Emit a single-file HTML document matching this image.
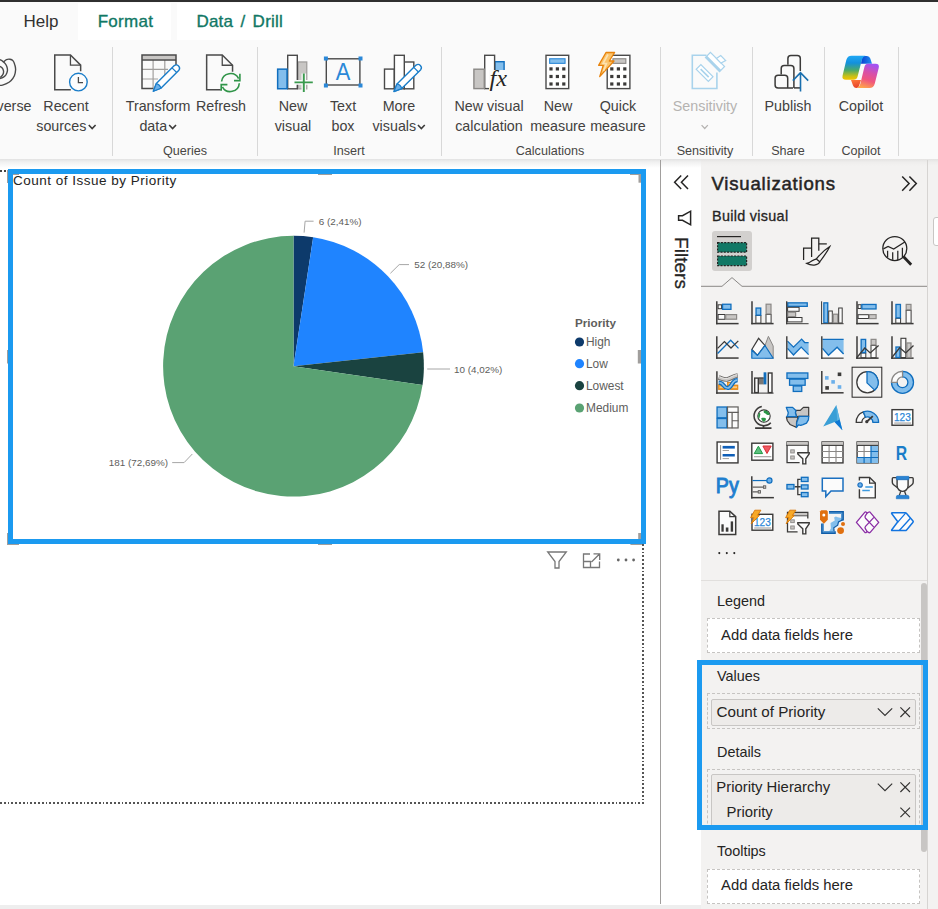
<!DOCTYPE html>
<html><head><meta charset="utf-8">
<style>
*{box-sizing:border-box;margin:0;padding:0}
html,body{width:938px;height:909px;overflow:hidden;background:#fff}
body{font-family:"Liberation Sans",sans-serif;color:#252423;position:relative}
.abs{position:absolute}
#topbar{left:0;top:0;width:938px;height:2px;background:#2f2f2f}
#ribbon{left:0;top:2px;width:938px;height:157px;background:#fafafa}
.tab{position:absolute;top:3px;height:37px;font-size:17px;line-height:37px;text-align:center;white-space:nowrap}
.tab.w{background:#fff;color:#117865;-webkit-text-stroke:0.35px #117865}
.rl{position:absolute;font-size:14.3px;line-height:20px;text-align:center;white-space:nowrap;color:#424140;transform:translateX(-50%)}
.gl{position:absolute;top:142.6px;font-size:12.6px;line-height:16px;text-align:center;white-space:nowrap;color:#484644;transform:translateX(-50%)}
.dv{position:absolute;top:47px;width:1px;height:109px;background:#d8d8d8}
svg{position:absolute;overflow:visible}
.chev{display:inline-block;width:7.8px;height:7.8px;margin-left:1.6px;position:relative;top:0px}
</style></head><body>
<div id="ribbon" class="abs"></div>
<div id="topbar" class="abs"></div>
<!-- tabs -->
<div class="tab" style="left:23px;width:36px;color:#323130">Help</div>
<div class="tab w" style="left:78px;width:93px;padding-left:2px;letter-spacing:0.3px">Format</div>
<div class="tab w" style="left:177px;width:123px;padding-left:2.5px;letter-spacing:0.25px;word-spacing:2.2px">Data / Drill</div>
<!-- ribbon shadow -->
<div class="abs" style="left:0;top:159px;width:938px;height:9px;background:linear-gradient(#e2e2e2,#f1f1f1 35%,#ffffff)"></div>
<div class="rl" style="left:14px;top:96px">verse</div>
<div class="rl" style="left:66px;top:96px">Recent<br>sources<svg class="chev" style="position:relative" viewBox="0 0 8 8"><path d="M0.5 2 L4 5.8 L7.5 2" fill="none" stroke="#3b3a39" stroke-width="1.6"/></svg></div>
<div class="rl" style="left:158px;top:96px">Transform<br>data<svg class="chev" style="position:relative" viewBox="0 0 8 8"><path d="M0.5 2 L4 5.8 L7.5 2" fill="none" stroke="#3b3a39" stroke-width="1.6"/></svg></div>
<div class="rl" style="left:221px;top:96px">Refresh</div>
<div class="rl" style="left:293px;top:96px">New<br>visual</div>
<div class="rl" style="left:343px;top:96px">Text<br>box</div>
<div class="rl" style="left:399px;top:96px">More<br>visuals<svg class="chev" style="position:relative" viewBox="0 0 8 8"><path d="M0.5 2 L4 5.8 L7.5 2" fill="none" stroke="#3b3a39" stroke-width="1.6"/></svg></div>
<div class="rl" style="left:489px;top:96px">New visual<br>calculation</div>
<div class="rl" style="left:558px;top:96px">New<br>measure</div>
<div class="rl" style="left:618px;top:96px">Quick<br>measure</div>
<div class="rl" style="left:788px;top:96px">Publish</div>
<div class="rl" style="left:861px;top:96px">Copilot</div>
<div class="rl" style="left:705px;top:96px;color:#b5b3b1">Sensitivity<br><svg class="chev" style="position:relative;margin:0" viewBox="0 0 8 8"><path d="M0.8 2.2 L4 5.6 L7.2 2.2" fill="none" stroke="#b5b3b1" stroke-width="1.3"/></svg></div>
<div class="gl" style="left:185px">Queries</div>
<div class="gl" style="left:349px">Insert</div>
<div class="gl" style="left:550px">Calculations</div>
<div class="gl" style="left:705px">Sensitivity</div>
<div class="gl" style="left:788px">Share</div>
<div class="gl" style="left:861px">Copilot</div>
<div class="dv" style="left:112px"></div>
<div class="dv" style="left:257px"></div>
<div class="dv" style="left:441px"></div>
<div class="dv" style="left:660px"></div>
<div class="dv" style="left:752px"></div>
<div class="dv" style="left:824px"></div>
<div class="dv" style="left:898px"></div>
<!-- RI-START --><svg class="abs" style="left:0;top:0" width="938" height="160" viewBox="0 0 938 160"><g fill="none" stroke="#4a4a4a" stroke-width="1.4"><path d="M3.7 61.9 C4.2 61.5 5.4 60.1 6.4 59.6 C7.4 59.2 8.8 59.0 9.9 59.2 C11.0 59.4 12.1 59.7 12.9 60.6 C13.7 61.5 14.4 63.3 14.8 64.8 C15.3 66.4 15.7 68.0 15.6 69.8 C15.5 71.6 15.2 73.9 14.4 75.7 C13.6 77.5 12.2 79.4 10.9 80.7 C9.6 82.0 7.8 83.0 6.4 83.7 C5.0 84.4 3.7 84.8 2.5 85.1 C1.3 85.4 -0.4 85.4 -1.0 85.5"/><path d="M-1.0 59.4 C-0.4 59.7 1.5 60.4 2.5 61.1 C3.5 61.8 4.2 62.5 5.0 63.4 C5.7 64.3 6.5 65.6 6.9 66.8 C7.3 68.0 7.6 69.5 7.4 70.8 C7.2 72.1 6.6 73.7 5.9 74.8 C5.2 75.8 4.7 76.5 3.5 77.2 C2.3 77.9 -0.2 78.5 -1.0 78.7"/><path d="M-1.0 66.0 C-0.5 66.3 1.2 67.0 2.0 67.8 C2.8 68.6 3.3 69.7 3.5 70.8 C3.7 71.9 3.4 73.3 3.0 74.3 C2.6 75.3 1.7 76.2 1.0 76.7 C0.3 77.2 -0.7 77.4 -1.0 77.5"/></g><path d="M80.3 71 V64.8 L70.1 54.6 H54.4 V89.4 H70.5" fill="none" stroke="#4a4a4a" stroke-width="1.5" transform="translate(0.35 0.35)"/><path d="M70.1 54.6 V64.8 H80.3" fill="none" stroke="#4a4a4a" stroke-width="1.3" transform="translate(0.35 0.35)"/><circle cx="78.4" cy="82.1" r="8.8" fill="#fdfdfd" stroke="#1a7dc9" stroke-width="1.4"/><path d="M78.4 77 V82.6 H83" fill="none" stroke="#4a4a4a" stroke-width="1.3"/><rect x="142" y="55" width="34" height="4.6" fill="#c8c6c4"/><path d="M153.1 60 V88.6 M164.8 60 V76 M142 69.3 H168 M142 79 H158" stroke="#a19f9d" stroke-width="1.2" fill="none"/><path d="M176 65 V55 H142 V88.6 H153.5 M142 60 H176" fill="none" stroke="#4a4a4a" stroke-width="1.5"/><path d="M153.3 91.2 L160.9 88.2 L178.9 70.2 A3.3 3.3 0 0 0 174.3 65.6 L156.3 83.6 Z" fill="#fff" stroke="#1a7dc9" stroke-width="1.4" stroke-linejoin="round"/><path d="M153.3 91.2 L160.9 88.2 Q160.0 84.5 156.3 83.6 Z" fill="#6cb0ea" stroke="#1a7dc9" stroke-width="1.2" stroke-linejoin="round"/><path d="M176.7 72.5 L172.0 67.8" stroke="#1a7dc9" stroke-width="1.2"/><path d="M232.2 71.5 V64.9 L221.9 54.7 H206.3 V89.3 H220.4" fill="none" stroke="#4a4a4a" stroke-width="1.5" transform="translate(0.35 0.35)"/><path d="M221.9 54.7 V64.9 H232.2" fill="none" stroke="#4a4a4a" stroke-width="1.3" transform="translate(0.35 0.35)"/><g fill="none" stroke="#2f9448" stroke-width="1.6"><path d="M221.6 81.5 A9 9 0 0 1 238.6 78.6"/><path d="M239.3 83.2 A9 9 0 0 1 222.4 86.8"/><path d="M239.9 73.8 V80.6 H234"/><path d="M221.2 90.8 V84.6 H227.4"/></g><rect x="298.05" y="61.95" width="8.70" height="26.90" fill="#c8c6c4" stroke="#a19f9d" stroke-width="1.3" /><rect x="287.70" y="55.30" width="9.60" height="33.50" fill="#ffffff" stroke="#4a4a4a" stroke-width="1.4" /><rect x="277.65" y="69.15" width="9.40" height="19.60" fill="#83beec" stroke="#106ebe" stroke-width="1.5" /><path d="M294.5 82.4 H312.8 M303.8 73.4 V92" stroke="#fafafa" stroke-width="4.6" fill="none"/><path d="M294.5 82.4 H312.8 M303.8 73.4 V92" stroke="#3a9a4e" stroke-width="1.9" fill="none"/><rect x="326.30" y="58.80" width="33.60" height="26.20" fill="none" stroke="#4a4a4a" stroke-width="1.4" /><rect x="323.9" y="56.5" width="4" height="4" fill="#2b88d8"/><rect x="358.5" y="56.5" width="4" height="4" fill="#2b88d8"/><rect x="323.9" y="83.5" width="4" height="4" fill="#2b88d8"/><rect x="358.5" y="83.5" width="4" height="4" fill="#2b88d8"/><text x="343" y="80.4" font-family="Liberation Sans, sans-serif" font-size="24" fill="#2b88d8" text-anchor="middle" textLength="14.6" lengthAdjust="spacingAndGlyphs">A</text><rect x="384.50" y="69.10" width="9.80" height="19.70" fill="#ffffff" stroke="#4a4a4a" stroke-width="1.4" /><rect x="404.30" y="62.00" width="9.50" height="26.80" fill="#ffffff" stroke="#4a4a4a" stroke-width="1.4" /><rect x="394.40" y="55.30" width="9.90" height="33.50" fill="#ffffff" stroke="#4a4a4a" stroke-width="1.4" /><path d="M394.0 91.5 L401.7 88.6 L420.7 69.7 A3.3 3.3 0 0 0 416.1 65.1 L397.0 83.9 Z" fill="#fff" stroke="#1a7dc9" stroke-width="1.4" stroke-linejoin="round"/><path d="M394.0 91.5 L401.7 88.6 Q400.8 84.8 397.0 83.9 Z" fill="#6cb0ea" stroke="#1a7dc9" stroke-width="1.2" stroke-linejoin="round"/><path d="M418.4 72.0 L413.8 67.3" stroke="#1a7dc9" stroke-width="1.2"/><rect x="494.90" y="61.70" width="9.20" height="13.60" fill="#83beec" stroke="#106ebe" stroke-width="1.4" /><rect x="484.70" y="55.30" width="9.90" height="33.30" fill="#ffffff" stroke="#4a4a4a" stroke-width="1.4" /><rect x="473.90" y="69.20" width="10.40" height="19.40" fill="#c8c6c4" stroke="#8a8886" stroke-width="1.4" /><rect x="489" y="70" width="18" height="22" fill="#fafafa"/><rect x="495.8" y="72" width="12" height="4.5" fill="#fafafa"/><text x="489.5" y="86.2" font-family="Liberation Serif, serif" font-style="italic" font-size="23" fill="#252423" textLength="17.5" lengthAdjust="spacingAndGlyphs">fx</text><rect x="546.00" y="55.30" width="22.70" height="33.30" fill="#ffffff" stroke="#4a4a4a" stroke-width="1.4" /><rect x="549.65" y="58.75" width="15.40" height="4.60" fill="#83beec" stroke="#2b88d8" stroke-width="1.1" /><rect x="549.4" y="67.30000000000001" width="3.2" height="3.2" fill="#3b3a39"/><rect x="549.4" y="74.9" width="3.2" height="3.2" fill="#3b3a39"/><rect x="549.4" y="82.4" width="3.2" height="3.2" fill="#3b3a39"/><rect x="555.8" y="67.30000000000001" width="3.2" height="3.2" fill="#3b3a39"/><rect x="555.8" y="74.9" width="3.2" height="3.2" fill="#3b3a39"/><rect x="555.8" y="82.4" width="3.2" height="3.2" fill="#3b3a39"/><rect x="562.1999999999999" y="67.30000000000001" width="3.2" height="3.2" fill="#3b3a39"/><rect x="562.1999999999999" y="74.9" width="3.2" height="3.2" fill="#3b3a39"/><rect x="562.1999999999999" y="82.4" width="3.2" height="3.2" fill="#3b3a39"/><rect x="607.20" y="55.30" width="22.70" height="33.30" fill="#ffffff" stroke="#4a4a4a" stroke-width="1.4" /><rect x="612.95" y="58.75" width="12.90" height="4.60" fill="#c8c6c4" stroke="#8a8886" stroke-width="1.1" /><rect x="610.1999999999999" y="67.30000000000001" width="3.2" height="3.2" fill="#3b3a39"/><rect x="610.1999999999999" y="74.9" width="3.2" height="3.2" fill="#3b3a39"/><rect x="610.1999999999999" y="82.4" width="3.2" height="3.2" fill="#3b3a39"/><rect x="616.8" y="67.30000000000001" width="3.2" height="3.2" fill="#3b3a39"/><rect x="616.8" y="74.9" width="3.2" height="3.2" fill="#3b3a39"/><rect x="616.8" y="82.4" width="3.2" height="3.2" fill="#3b3a39"/><rect x="623.1999999999999" y="67.30000000000001" width="3.2" height="3.2" fill="#3b3a39"/><rect x="623.1999999999999" y="74.9" width="3.2" height="3.2" fill="#3b3a39"/><rect x="623.1999999999999" y="82.4" width="3.2" height="3.2" fill="#3b3a39"/><path d="M606 52.5 H614.6 L609.3 61 H614 L599.7 76.6 L603.3 65.3 H598.6 Z" fill="#fac36b" stroke="#e8830c" stroke-width="1.3" stroke-linejoin="round"/><path d="M608 54.5 L603 63.5 H606.5 L603.5 71" stroke="#fde2b0" stroke-width="1.6" fill="none"/><path d="M706.5 55.2 H692.3 V88.5 H716.9 V72.6" fill="none" stroke="#a9d3ec" stroke-width="1.6"/><g transform="translate(704.6 73) rotate(45)"><rect x="-8.6" y="-3.3" width="17.2" height="6.6" fill="#fff" stroke="#a9d3ec" stroke-width="1.2"/><path d="M-5.6 0 H5.8" stroke="#a9d3ec" stroke-width="1.7"/></g><g transform="translate(715 62) rotate(45)"><rect x="-10" y="-3.5" width="20" height="7" fill="#fff" stroke="#a9d3ec" stroke-width="1.2"/><rect x="-10" y="1.2" width="20" height="2.6" fill="#a9d3ec"/><path d="M-1.5 -3.5 L-0.5 -8.6 H6.5 L5 -3.5 Z" fill="#fff" stroke="#a9d3ec" stroke-width="1.2"/></g><g fill="none" stroke="#3b3a39" stroke-width="1.5"><path d="M787.9 64.8 V58.5 Q787.9 55.5 790.9 55.5 H797.3 Q800.3 55.5 800.3 58.5 V71"/><path d="M781.2 74.5 V68.5 Q781.2 65.5 784.2 65.5 H790.9 Q793.9 65.5 793.9 68.5 V87.9"/><path d="M793 87.9 H778.1 Q775.1 87.9 775.1 84.9 V78.2 Q775.1 75.2 778.1 75.2 H784.7 Q787.7 75.2 787.7 78.2 V87.9"/><path d="M793.9 87.9 H800.5"/></g><path d="M800.5 91.4 V72.4 M792.8 80.6 L800.5 72.6 L808.2 80.6" fill="none" stroke="#1a6fae" stroke-width="1.6"/><defs>
<linearGradient id="cpA" x1="0" y1="0" x2="0" y2="1"><stop offset="0" stop-color="#20a8f5"/><stop offset="0.3" stop-color="#1390dd"/><stop offset="0.6" stop-color="#4aa96a"/><stop offset="0.85" stop-color="#c9c016"/><stop offset="1" stop-color="#f5c400"/></linearGradient>
<linearGradient id="cpB" x1="0.6" y1="0" x2="0.3" y2="1"><stop offset="0" stop-color="#a352f2"/><stop offset="0.35" stop-color="#d850a8"/><stop offset="0.65" stop-color="#f0567e"/><stop offset="1" stop-color="#ffa64a"/></linearGradient>
<linearGradient id="cpC" x1="0" y1="0" x2="1" y2="0"><stop offset="0" stop-color="#0a3fd0"/><stop offset="1" stop-color="#1f8ff0"/></linearGradient>
<linearGradient id="cpD" x1="0" y1="0" x2="0.3" y2="1"><stop offset="0" stop-color="#ff7a3a"/><stop offset="1" stop-color="#e8452a"/></linearGradient>
</defs>
<path d="M862 56 H867 Q869.5 56 870.3 58.5 L872 63.8 H861 Z" fill="url(#cpC)"/>
<path d="M851 80 H861 L859 86 Q858.3 87.9 856.5 87.9 H856 Q853.8 87.9 853 85.5 Z" fill="url(#cpD)"/>
<path d="M851.5 55.7 H865.5 Q862.8 56.5 861.8 60 L857.6 76.5 Q856.7 79.8 853.5 79.8 H846 Q841.6 79.8 842.6 75.5 L846.3 60 Q847.4 55.7 851.5 55.7 Z" fill="url(#cpA)"/>
<path d="M868 63.7 H875.5 Q879.8 63.7 878.7 68 L874.8 83.5 Q873.6 88 869.5 88 H856.5 Q859.2 87.6 860.3 84 L864.4 67 Q865.2 63.7 868 63.7 Z" fill="url(#cpB)"/>
</svg><!-- RI-END -->

<!-- page dotted outline -->
<div class="abs" style="left:0;top:170px;width:8px;height:2px;background:repeating-linear-gradient(90deg,#444 0 1.8px,transparent 1.8px 3.8px)"></div>
<div class="abs" style="left:0;top:802px;width:644px;height:1.6px;background:repeating-linear-gradient(90deg,#555 0 1.8px,transparent 1.8px 3.8px)"></div>
<div class="abs" style="left:642.2px;top:544px;width:1.7px;height:259.5px;background:repeating-linear-gradient(180deg,#555 0 1.8px,transparent 1.8px 3.8px)"></div>
<!-- visual frame -->
<div class="abs" style="left:8px;top:169px;width:638px;height:375px;border:5px solid #1b9af0;background:#fff"></div>
<div class="abs" id="vtitle" style="left:13px;top:173px;font-size:13.5px;letter-spacing:0.5px;line-height:16px;color:#252423;white-space:nowrap">Count of Issue by Priority</div>
<svg class="abs" style="left:0;top:0" width="660" height="600" viewBox="0 0 660 600">
<path d="M293.5 366.2 L293.50 235.80 A130.4 130.4 0 0 1 313.17 237.29 Z" fill="#0d3a6b"/>
<path d="M293.5 366.2 L313.17 237.29 A130.4 130.4 0 0 1 423.15 352.24 Z" fill="#1f84ff"/>
<path d="M293.5 366.2 L423.15 352.24 A130.4 130.4 0 0 1 422.53 385.05 Z" fill="#1a4340"/>
<path d="M293.5 366.2 L422.53 385.05 A130.4 130.4 0 1 1 293.50 235.80 Z" fill="#5aa273"/>

<g fill="none" stroke="#a6a6a6" stroke-width="1">
<polyline points="304.1,232.6 305.1,221.2 313.6,221.2"/>
<polyline points="390.4,273.3 399.2,264.6 409,264.6"/>
<polyline points="427.2,369 450,369"/>
<polyline points="192.3,454 184.1,462.6 172.2,462.6"/>
</g>
<g font-family="Liberation Sans, sans-serif" font-size="9.9" fill="#605e5c">
<text x="318.8" y="224.7">6 (2,41%)</text>
<text x="414.2" y="268.1">52 (20,88%)</text>
<text x="454" y="372.7">10 (4,02%)</text>
<text x="168" y="466.1" text-anchor="end">181 (72,69%)</text>
</g>
<text x="575" y="326.5" font-family="Liberation Sans, sans-serif" font-size="11.7" font-weight="bold" fill="#605e5c">Priority</text>
<g font-family="Liberation Sans, sans-serif" font-size="11.9" fill="#605e5c">
<circle cx="579.5" cy="342" r="4.6" fill="#0d3a6b"/><text x="586" y="346.2">High</text>
<circle cx="579.5" cy="363.7" r="4.6" fill="#1f84ff"/><text x="586" y="367.9">Low</text>
<circle cx="579.5" cy="385.7" r="4.6" fill="#1a4340"/><text x="586" y="389.9">Lowest</text>
<circle cx="579.5" cy="408" r="4.6" fill="#5aa273"/><text x="586" y="412.2">Medium</text>
</g>
<!-- handles -->
<g fill="#a09e9c">
<rect x="7" y="170" width="1" height="13"/><rect x="13" y="174" width="6" height="1"/>
<rect x="638.5" y="174" width="2.5" height="8.7"/><rect x="630" y="174" width="11" height="1"/>
<rect x="7" y="533" width="1" height="11.7"/><rect x="7" y="544" width="12" height="1"/>
<rect x="638.2" y="533" width="2.8" height="6"/><rect x="630.4" y="544" width="11.5" height="1"/>
<rect x="7" y="350" width="1" height="13.5"/><rect x="637.8" y="350" width="3.2" height="13.5"/>
<rect x="318" y="174" width="14" height="1"/><rect x="318" y="544" width="14" height="1"/>
</g>
<!-- visual header icons -->
<g fill="none" stroke="#777" stroke-width="1.3">
<path d="M547.7 552 H566.3 L559 561.5 V568 H555 V561.5 Z"/>
<path d="M590 554 H583.5 V567.5 H599.5 V561.5 M583.5 561.5 H590.5 V567.5 M593.5 553.8 H599.7 V560 M599.5 554 L591.5 562"/>
</g>
<g fill="#666"><circle cx="618.3" cy="560" r="1.4"/><circle cx="626" cy="560" r="1.4"/><circle cx="633.6" cy="560" r="1.4"/></g>
</svg>
<!-- bottom status strip -->
<div class="abs" style="left:0;top:905px;width:701px;height:4px;background:#eeeeee"></div>


<!-- filters pane -->
<div class="abs" style="left:660px;top:160px;width:1px;height:744px;background:#a19f9d"></div>
<div class="abs" style="left:701px;top:165px;width:226px;height:744px;background:#f3f2f1"></div>
<div class="abs" style="left:701px;top:159px;width:237px;height:7px;background:linear-gradient(#e4e3e2,#efeeed 50%,#f3f2f1)"></div>
<div class="abs" style="left:927px;top:160px;width:1px;height:749px;background:#d6d4d2"></div>
<div class="abs" style="left:928px;top:165px;width:10px;height:744px;background:#f3f2f1"></div>
<div class="abs" style="left:933px;top:217px;width:12px;height:29px;background:#fff;border:1px solid #c8c6c4;border-radius:3px"></div>
<div class="abs" style="left:701px;top:580px;width:226px;height:1px;background:#e1dfdd"></div>
<div class="abs" id="filt" style="left:673.2px;top:237px;width:15px;height:52px"><div style="position:absolute;left:0;top:0;transform-origin:0 0;transform:translate(18.6px,0) rotate(90deg);font-size:19.1px;line-height:22px;white-space:nowrap;-webkit-text-stroke:0.3px #252423">Filters</div></div>
<div class="abs" style="left:711.5px;top:171.97px;font-size:18.6px;line-height:24.18px;white-space:nowrap;letter-spacing:0.78px;-webkit-text-stroke:0.5px #252423;">Visualizations</div>
<div class="abs" style="left:712px;top:207.25px;font-size:14.4px;line-height:18.72px;white-space:nowrap;letter-spacing:0.3px;-webkit-text-stroke:0.3px #252423;">Build visual</div>
<div class="abs" style="left:712px;top:231px;width:40px;height:40px;background:#d2d0ce;border-radius:3px"></div>
<svg class="abs" style="left:0;top:0" width="938" height="909" viewBox="0 0 938 909">
<g fill="none" stroke="#252423" stroke-width="1.5">
<path d="M688 175.5 l-6.6 6.8 l6.6 6.8 M681.2 175.5 l-6.6 6.8 l6.6 6.8"/>
<path d="M902.2 176.5 l6.9 7.1 l-6.9 7.1 M909.4 176.5 l6.9 7.1 l-6.9 7.1"/>
<path d="M690.6 211.2 V224.8 L682.5 220.3 H678.6 V215.7 H682.5 Z"/>
</g>
<!-- build tab -->
<rect x="717" y="236" width="24" height="1.2" fill="#252423"/>
<rect x="717.6" y="242.6" width="29" height="9.6" fill="#117865" stroke="#252423" stroke-width="1.2" stroke-dasharray="2 1.3"/>
<rect x="717.6" y="256" width="29" height="9.6" fill="#117865" stroke="#252423" stroke-width="1.2" stroke-dasharray="2 1.3"/>
<path d="M701 286.3 H722 L732 277.6 L742 286.3 H927" fill="none" stroke="#8a8886" stroke-width="1"/>
<!-- format tab icon -->
<g fill="none" stroke="#252423" stroke-width="1.25">
<path d="M803.6 260 V248 H811.6"/>
<path d="M811.6 257 V238 H818.8 V250.8"/>
<path d="M818.8 243.9 H826.8"/>
<path d="M829.8 246.5 C825 249.5 819.5 255 816.3 259 L819.8 261.8 C823 257.5 827.5 251.5 829.8 246.5 Z" fill="#f3f2f1"/>
<path d="M816.3 259 C813 259 811.5 262.5 806.8 263.4 C811 265.8 818 266 819.8 261.8"/>
</g>
<!-- analytics icon -->
<g fill="none" stroke="#252423" stroke-width="1.25">
<circle cx="894.8" cy="248.5" r="12"/>
<path d="M883.4 248.9 L888.1 246.4 L893.7 249.1 L904.8 242"/>
<path d="M887.6 250.8 V257.4 M892.7 252.2 V259.8 M897.8 250.8 V260 M902.4 247.7 V257.4"/>
</g>
<path d="M903.6 256.8 L911.2 264.8" stroke="#252423" stroke-width="2.8" fill="none"/>
<!-- more ... -->
<g fill="#252423"><circle cx="719.3" cy="553.1" r="1.05"/><circle cx="726.8" cy="553.1" r="1.05"/><circle cx="734.3" cy="553.1" r="1.05"/></g>
<!-- VIZ-START --><g transform="translate(715.60 301.00)"><path d="M1.2 0.3 V23.35" stroke="#3b3a39" stroke-width="1.5" fill="none"/><path d="M0.44999999999999996 22.6 H23" stroke="#3b3a39" stroke-width="1.5" fill="none"/><rect x="2.50" y="3.80" width="3.50" height="3.90" fill="#fbfbfb" stroke="#3b3a39" stroke-width="1"/><rect x="6.95" y="3.25" width="8.40" height="5.10" fill="#83beec" stroke="#106ebe" stroke-width="1.3"/><rect x="2.50" y="13.50" width="6.80" height="4.80" fill="#fbfbfb" stroke="#3b3a39" stroke-width="1"/><rect x="10.10" y="13.60" width="10.90" height="4.60" fill="#c8c6c4" stroke="#8a8886" stroke-width="1.2"/></g>
<g transform="translate(750.60 301.00)"><path d="M1.4 0.3 V23.35" stroke="#3b3a39" stroke-width="1.5" fill="none"/><path d="M0.6499999999999999 22.6 H23" stroke="#3b3a39" stroke-width="1.5" fill="none"/><rect x="5.30" y="14.50" width="5.00" height="7.60" fill="#fbfbfb" stroke="#3b3a39" stroke-width="1"/><rect x="5.45" y="7.05" width="4.70" height="7.10" fill="#83beec" stroke="#106ebe" stroke-width="1.3"/><rect x="15.40" y="13.50" width="5.10" height="8.60" fill="#fbfbfb" stroke="#3b3a39" stroke-width="1"/><rect x="15.50" y="3.20" width="4.90" height="9.80" fill="#c8c6c4" stroke="#8a8886" stroke-width="1.2"/></g>
<g transform="translate(785.60 301.00)"><rect x="2.15" y="1.85" width="19.50" height="3.50" fill="#83beec" stroke="#106ebe" stroke-width="1.3"/><rect x="2.00" y="6.30" width="11.50" height="4.00" fill="#fbfbfb" stroke="#3b3a39" stroke-width="1"/><rect x="2.10" y="11.20" width="7.90" height="4.40" fill="#c8c6c4" stroke="#8a8886" stroke-width="1.2"/><rect x="2.00" y="16.50" width="14.40" height="4.40" fill="#fbfbfb" stroke="#3b3a39" stroke-width="1"/><path d="M1.1 0.3 V23.2" stroke="#3b3a39" stroke-width="1.3" fill="none"/><path d="M0.45000000000000007 22.7 H23" stroke="#3b3a39" stroke-width="1" fill="none"/></g>
<g transform="translate(820.60 301.00)"><rect x="3.25" y="1.85" width="3.90" height="20.00" fill="#83beec" stroke="#106ebe" stroke-width="1.3"/><rect x="8.10" y="10.00" width="3.60" height="12.00" fill="#fbfbfb" stroke="#3b3a39" stroke-width="1"/><rect x="12.60" y="13.20" width="4.60" height="8.70" fill="#c8c6c4" stroke="#8a8886" stroke-width="1.2"/><rect x="18.10" y="7.00" width="3.50" height="15.00" fill="#fbfbfb" stroke="#3b3a39" stroke-width="1"/><path d="M1 0.3 V23.2" stroke="#3b3a39" stroke-width="1" fill="none"/><path d="M0.5 22.7 H23" stroke="#3b3a39" stroke-width="1" fill="none"/></g>
<g transform="translate(855.60 301.00)"><path d="M1.4 0.3 V23.35" stroke="#3b3a39" stroke-width="1.5" fill="none"/><path d="M0.6499999999999999 22.6 H23" stroke="#3b3a39" stroke-width="1.5" fill="none"/><rect x="2.50" y="3.70" width="3.00" height="3.80" fill="#fbfbfb" stroke="#3b3a39" stroke-width="1"/><rect x="6.25" y="3.45" width="14.20" height="4.50" fill="#83beec" stroke="#106ebe" stroke-width="1.3"/><rect x="2.50" y="13.70" width="10.50" height="3.80" fill="#fbfbfb" stroke="#3b3a39" stroke-width="1"/><rect x="13.70" y="13.60" width="6.80" height="4.00" fill="#c8c6c4" stroke="#8a8886" stroke-width="1.2"/></g>
<g transform="translate(890.60 301.00)"><path d="M1.4 0.3 V23.35" stroke="#3b3a39" stroke-width="1.5" fill="none"/><path d="M0.6499999999999999 22.6 H23" stroke="#3b3a39" stroke-width="1.5" fill="none"/><rect x="5.20" y="17.30" width="4.80" height="4.80" fill="#fbfbfb" stroke="#3b3a39" stroke-width="1"/><rect x="5.35" y="3.45" width="4.50" height="13.40" fill="#83beec" stroke="#106ebe" stroke-width="1.3"/><rect x="15.50" y="9.30" width="5.00" height="12.80" fill="#fbfbfb" stroke="#3b3a39" stroke-width="1"/><rect x="15.60" y="3.40" width="4.80" height="5.40" fill="#c8c6c4" stroke="#8a8886" stroke-width="1.2"/></g>
<g transform="translate(715.60 335.75)"><path d="M1.2 0.4 V23.05" stroke="#3b3a39" stroke-width="1.5" fill="none"/><path d="M0.44999999999999996 22.3 H23" stroke="#3b3a39" stroke-width="1.5" fill="none"/><polyline points="2,17.8 15.1,4.5 22.9,12.6" fill="none" stroke="#106ebe" stroke-width="1.3"/><polyline points="2,12.6 8.8,5.9 15.4,12.3 22.7,5.1" fill="none" stroke="#3b3a39" stroke-width="1.3"/></g>
<g transform="translate(750.60 335.75)"><path d="M14.4 9.7 L17.8 0.6 L22.6 10.3 V22.5 H14.4 Z" fill="#c8c6c4" stroke="#8a8886" stroke-width="1"/><path d="M1.2 13.7 L8 2.6 L14.4 9.7 L6.9 19.7 Z" fill="#fbfbfb" stroke="#3b3a39" stroke-width="1.2"/><path d="M1.2 14.3 L6.9 19.7 L14.4 9.7 L22.6 22.5 H1.2 Z" fill="#83beec" stroke="#106ebe" stroke-width="1.2" stroke-linejoin="round"/></g>
<g transform="translate(785.60 335.75)"><path d="M1.9 12.6 L7.9 19.3 L15.6 11.4 L23 18.9 V22 H1.9 Z" fill="#fbfbfb"/><path d="M1.9 5.4 L7.9 11.4 L16 3.4 L19.1 6.8 H23 V18.9 L15.6 11.4 L7.9 19.3 L1.9 12.6 Z" fill="#83beec"/><path d="M1.9 5.4 L7.9 11.4 L16 3.4 L19.1 6.8 H23 M23 18.9 L15.6 11.4 L7.9 19.3 L1.9 12.6" fill="none" stroke="#106ebe" stroke-width="1.3"/><path d="M1.2 0.4 V23.0" stroke="#3b3a39" stroke-width="1.4" fill="none"/><path d="M0.5 22.4 H23" stroke="#3b3a39" stroke-width="1.2" fill="none"/></g>
<g transform="translate(820.60 335.75)"><path d="M1.9 12.6 L7.9 19.5 L16.5 11.4 L23 18.3 V22 H1.9 Z" fill="#fbfbfb"/><path d="M1.9 3.4 H23 V18.3 L16.5 11.4 L7.9 19.5 L1.9 12.6 Z" fill="#83beec"/><path d="M1.9 3.6 H23 M23 18.3 L16.5 11.4 L7.9 19.5 L1.9 12.6" fill="none" stroke="#106ebe" stroke-width="1.4"/><path d="M1.2 0.4 V23.0" stroke="#3b3a39" stroke-width="1.4" fill="none"/><path d="M0.5 22.4 H23" stroke="#3b3a39" stroke-width="1.2" fill="none"/></g>
<g transform="translate(855.60 335.75)"><path d="M1.4 0.4 V23.15" stroke="#3b3a39" stroke-width="1.5" fill="none"/><path d="M0.6499999999999999 22.4 H23" stroke="#3b3a39" stroke-width="1.5" fill="none"/><rect x="5.40" y="17.30" width="4.80" height="4.60" fill="#fbfbfb" stroke="#3b3a39" stroke-width="1"/><rect x="5.55" y="3.65" width="4.50" height="13.20" fill="#83beec" stroke="#106ebe" stroke-width="1.3"/><rect x="15.40" y="9.70" width="5.10" height="12.20" fill="#fbfbfb" stroke="#3b3a39" stroke-width="1"/><rect x="15.50" y="3.60" width="4.90" height="5.60" fill="#c8c6c4" stroke="#8a8886" stroke-width="1.2"/><polyline points="1.1,22 9.2,12.3 14.6,17.2 23,9.7" fill="none" stroke="#3b3a39" stroke-width="1.3"/></g>
<g transform="translate(890.60 335.75)"><path d="M1.4 0.4 V23.15" stroke="#3b3a39" stroke-width="1.5" fill="none"/><path d="M0.6499999999999999 22.4 H23" stroke="#3b3a39" stroke-width="1.5" fill="none"/><rect x="5.35" y="11.25" width="4.00" height="10.50" fill="#83beec" stroke="#106ebe" stroke-width="1.3"/><rect x="10.35" y="2.55" width="4.90" height="19.30" fill="#fbfbfb" stroke="#3b3a39" stroke-width="1.1"/><rect x="16.20" y="7.20" width="4.20" height="14.60" fill="#c8c6c4" stroke="#8a8886" stroke-width="1.2"/><polyline points="1.1,22 9.1,12 15.1,17.2 22.9,9.7" fill="none" stroke="#3b3a39" stroke-width="1.3"/></g>
<g transform="translate(715.60 370.50)"><rect x="3" y="14.2" width="6.6" height="4.8" fill="#f59b23" stroke="#d87a0a" stroke-width="0.7"/><rect x="15" y="14.5" width="7.3" height="4.5" fill="#f59b23" stroke="#d87a0a" stroke-width="0.7"/><rect x="12" y="11.8" width="5.5" height="3.4" fill="#f59b23" stroke="#d87a0a" stroke-width="0.7"/><path d="M4 16.6 H8.6 M16.5 16.7 H21.4 M13 13.3 H16" stroke="#fcd9a4" stroke-width="1.2"/><path d="M3.1 7 C6 8 8.5 9.4 11.5 9 C15.5 8.2 17.5 5.6 22.1 5" fill="none" stroke="#6e6c6a" stroke-width="4.6"/><path d="M3.6 7.2 C6 8 8.5 9.4 11.5 9 C15.5 8.2 17.5 5.6 21.6 5.1" fill="none" stroke="#c8c6c4" stroke-width="2.8"/><path d="M3.6 6.2 C6 7 8.5 8.4 11.5 8 C15.5 7.2 17.5 4.6 21.6 4.1" fill="none" stroke="#e8e6e4" stroke-width="0.9"/><path d="M3.1 12.2 C8.5 12.2 7.5 17.5 12 17.5 C16.5 17.5 15.8 9.7 22.1 9.7" fill="none" stroke="#106ebe" stroke-width="4.2"/><path d="M3.6 12.2 C8.5 12.2 7.5 17.5 12 17.5 C16.5 17.5 15.8 9.7 21.6 9.7" fill="none" stroke="#83beec" stroke-width="1.7"/><path d="M1.3 0.7 V23.25" stroke="#3b3a39" stroke-width="1.5" fill="none"/><path d="M0.55 22.5 H23.2" stroke="#3b3a39" stroke-width="1.5" fill="none"/></g>
<g transform="translate(750.60 370.50)"><path d="M1.4 0.6 V23.1" stroke="#3b3a39" stroke-width="1.5" fill="none"/><path d="M0.6499999999999999 22.6 H23" stroke="#3b3a39" stroke-width="1" fill="none"/><rect x="4.10" y="7.60" width="3.60" height="14.50" fill="#fbfbfb" stroke="#3b3a39" stroke-width="1.4"/><rect x="8.4" y="7" width="4.8" height="6.9" fill="#797775"/><rect x="13" y="1.8" width="2.8" height="12.1" fill="#106ebe"/><rect x="17.70" y="2.50" width="3.70" height="19.60" fill="#fbfbfb" stroke="#3b3a39" stroke-width="1.4"/><path d="M8.4 7.5 H13" stroke="#3b3a39" stroke-width="1" /></g>
<g transform="translate(785.60 370.50)"><rect x="1.35" y="2.45" width="20.90" height="5.50" fill="#83beec" stroke="#106ebe" stroke-width="1.3"/><rect x="3.95" y="8.65" width="15.60" height="6.10" fill="#83beec" stroke="#106ebe" stroke-width="1.3"/><rect x="7.65" y="15.45" width="8.50" height="5.50" fill="#83beec" stroke="#106ebe" stroke-width="1.3"/></g>
<g transform="translate(820.60 370.50)"><path d="M1.2 0.6 V23.05" stroke="#3b3a39" stroke-width="1.5" fill="none"/><path d="M0.44999999999999996 22.3 H23" stroke="#3b3a39" stroke-width="1.5" fill="none"/><rect x="17.099999999999998" y="1.9999999999999998" width="3.6" height="3.6" fill="#3b3a39"/><rect x="4.7" y="15.599999999999998" width="3.6" height="3.6" fill="#3b3a39"/><rect x="4.4" y="5.6000000000000005" width="3.6" height="3.6" fill="#6cb0ea"/><rect x="10.7" y="9.6" width="3.6" height="3.6" fill="#6cb0ea"/><rect x="17.099999999999998" y="14.7" width="3.6" height="3.6" fill="#6cb0ea"/></g>
<g transform="translate(855.60 370.50)"><rect x="-3.5" y="-3.3" width="29.7" height="30" fill="none" stroke="#252423" stroke-width="1"/><circle cx="11.8" cy="11.8" r="10.6" fill="#fbfbfb" stroke="#3b3a39" stroke-width="1.3"/><path d="M11.4 12.4 L11.4 1.2 A10.6 10.6 0 0 1 19.1 19.6 Z" fill="#83beec" stroke="#106ebe" stroke-width="1.3" stroke-linejoin="round"/></g>
<g transform="translate(890.60 370.50)"><path d="M11.9 0.8 A11 11 0 1 1 0.9 11.8 H6.5 A5.4 5.4 0 1 0 11.9 6.4 Z" fill="#83beec" stroke="#106ebe" stroke-width="1.3"/><path d="M11.9 0.8 A11 11 0 0 0 0.9 11.8 H6.5 A5.4 5.4 0 0 1 11.9 6.4 Z" fill="#fbfbfb" stroke="#8a8886" stroke-width="1.2"/></g>
<g transform="translate(715.60 405.25)"><rect x="1.45" y="1.75" width="9.80" height="10.80" fill="#83beec" stroke="#106ebe" stroke-width="1.3"/><rect x="1.45" y="13.25" width="9.80" height="9.40" fill="#83beec" stroke="#106ebe" stroke-width="1.3"/><rect x="11.90" y="1.70" width="10.60" height="21.00" fill="#fbfbfb" stroke="#605e5c" stroke-width="1.2"/><path d="M11.6 7.2 H23 M16.5 7.2 V23 M16.5 15.5 H23" stroke="#605e5c" stroke-width="1.2" fill="none"/></g>
<g transform="translate(750.60 405.25)"><circle cx="13.4" cy="10.8" r="6.2" fill="#fff" stroke="#3b3a39" stroke-width="1.1"/><path d="M13.2 5.4 C15 4.6 18.6 6 19 9.6 C17.6 10.2 15.6 9.6 14.6 8 C13.6 8.4 12.6 7 13.2 5.4 Z M8.4 8 C9.6 7.4 10.2 8.6 9.4 10.4 C9.2 11.8 8.8 13 8.2 13.4 C7.2 12 7.4 9.4 8.4 8 Z M10.6 13 C12.4 12.2 14.6 12.4 15.4 13.4 C15.4 15 14.4 16.2 13 16.4 C11.6 15.8 10.8 14.6 10.6 13 Z" fill="#2a9646"/><path d="M11.2 1.2 A9.7 9.7 0 1 0 20.2 17.4" fill="none" stroke="#3b3a39" stroke-width="1.5"/><path d="M12.9 20.3 V22.6 M4.5 22.8 H20.9" stroke="#3b3a39" stroke-width="1.7" fill="none"/></g>
<g transform="translate(785.60 405.25)"><path d="M10.3 5.1 H14.7 L17.8 2.1 H23.1 V11 H13.6 L10.9 11.4 L9.8 7.4 Z" fill="#c8c6c4" stroke="#3b3a39" stroke-width="1.2" stroke-linejoin="round"/><path d="M0.8 11.8 H12.5 L10.9 17.5 V22.1 L7.8 20.7 L4.4 19.2 L1.7 15.5 Z" fill="#c8c6c4" stroke="#3b3a39" stroke-width="1.2" stroke-linejoin="round"/><path d="M0.7 2.1 H7 L10.3 5.2 L9.8 7.6 L10.9 11.4 H1.2 L2.1 10 L2.7 7.4 L1.5 4.3 Z" fill="#83beec" stroke="#106ebe" stroke-width="1.3" stroke-linejoin="round"/><path d="M13.6 11.1 H23.1 L22.8 14.7 L20.9 17.8 L17.4 19.3 L15.1 20.2 L12.9 19.7 L10.9 22.2 L11.2 17 Z" fill="#83beec" stroke="#106ebe" stroke-width="1.3" stroke-linejoin="round"/></g>
<g transform="translate(820.60 405.25)"><path d="M15.7 -0.3 L2.6 21.2 L14 16.7 L21.8 25 Z" fill="#3a9fd6"/><path d="M14 16.7 L18.9 14.2 L21.8 25 Z" fill="#0f78d4"/><path d="M15.7 -0.3 L18.9 14.2 L16.6 15.4 Z" fill="#5cb4e2"/></g>
<g transform="translate(855.60 405.25)"><path d="M0.6 17.2 A11.2 11.2 0 0 1 7.8 6.7 L9.9 12 A5.5 5.5 0 0 0 6.3 17.2 Z" fill="#fbfbfb" stroke="#3b3a39" stroke-width="1.3" stroke-linejoin="round"/><path d="M7.8 6.7 A11.2 11.2 0 0 1 23 17.2 H17.3 A5.5 5.5 0 0 0 9.9 12 Z" fill="#83beec" stroke="#106ebe" stroke-width="1.3" stroke-linejoin="round"/><path d="M10.6 17 L17.2 10.9" stroke="#3b3a39" stroke-width="1.8"/><circle cx="11.2" cy="16.4" r="1.6" fill="#3b3a39"/></g>
<g transform="translate(890.60 405.25)"><rect x="1.40" y="4.40" width="20.80" height="15.60" fill="#fff" stroke="#3b3a39" stroke-width="1.4"/><text x="11.8" y="15.6" font-family="Liberation Sans, sans-serif" font-size="11.6" fill="#2b88d8" stroke="#2b88d8" stroke-width="0.25" text-anchor="middle" textLength="16.8" lengthAdjust="spacingAndGlyphs">123</text><path d="M3.6 17.8 H20.6" stroke="#a19f9d" stroke-width="1.1"/></g>
<g transform="translate(715.60 440.00)"><rect x="1.50" y="2.00" width="20.90" height="20.90" fill="#fff" stroke="#3b3a39" stroke-width="1.4"/><path d="M5 5.1 V19.8" stroke="#8a8886" stroke-width="1"/><rect x="7" y="5.9" width="12.2" height="2.7" fill="#0f5fb8"/><rect x="7" y="14" width="12.2" height="2.5" fill="#0f5fb8"/><path d="M7 10.5 H13.4 M7 18.6 H13.4" stroke="#a19f9d" stroke-width="1"/></g>
<g transform="translate(750.60 440.00)"><rect x="1.20" y="3.20" width="21.10" height="17.00" fill="#fff" stroke="#3b3a39" stroke-width="1.4"/><path d="M3.6 13.6 H12 L7.8 6.2 Z" fill="#5cbf7e" stroke="#1f9a46" stroke-width="1" stroke-linejoin="round"/><path d="M12.3 6 H20.6 L16.4 13.5 Z" fill="#ee5a62" stroke="#d92c36" stroke-width="1" stroke-linejoin="round"/><path d="M3.4 16.7 H20.7" stroke="#a19f9d" stroke-width="1.1"/></g>
<g transform="translate(785.60 440.00)"><rect x="1.4" y="1.9" width="21" height="21.4" fill="#fbfbfb"/><path d="M22.5 12.5 V1.9500000000000002 H1.45 V22.7 H14" fill="none" stroke="#3b3a39" stroke-width="1.3"/><rect x="1.4" y="2.0" width="20.8" height="3.2" fill="#c8c6c4"/><path d="M0.7 5.3 H22.9" stroke="#3b3a39" stroke-width="1"/><rect x="5.15" y="9.85" width="3.50" height="3.10" fill="#c8c6c4" stroke="#8a8886" stroke-width="0.9"/><rect x="5.15" y="15.95" width="3.50" height="3.10" fill="#c8c6c4" stroke="#8a8886" stroke-width="0.9"/><rect x="10.5" y="10" width="14" height="17" fill="#f3f2f1" opacity="0"/><path d="M12.2 12.8 H23.6 V13.9 L20.2 18.8 V23.9 H17.2 V18.8 L12.2 13.9 Z" fill="#fdfdfd" stroke="#3b3a39" stroke-width="1.4" stroke-linejoin="miter"/></g>
<g transform="translate(820.60 440.00)"><rect x="1.50" y="2.00" width="20.90" height="20.90" fill="#fff" stroke="#3b3a39" stroke-width="1.4"/><rect x="1.5" y="2" width="20.9" height="3" fill="#c8c6c4"/><path d="M8.5 5.4 V23 M15.4 5.4 V23 M1.4 11.5 H22.5 M1.4 17.5 H22.5" stroke="#8a8886" stroke-width="1.1" fill="none"/><path d="M1.4 5.4 H22.5" stroke="#3b3a39" stroke-width="1.1"/></g>
<g transform="translate(855.60 440.00)"><rect x="1.50" y="2.00" width="20.90" height="20.90" fill="#fff" stroke="#3b3a39" stroke-width="1.4"/><rect x="1.5" y="2" width="20.9" height="3" fill="#c8c6c4"/><rect x="15.4" y="5.4" width="7" height="17.5" fill="#83beec"/><rect x="1.5" y="17.5" width="20.9" height="5.4" fill="#83beec"/><path d="M8.5 5.4 V17.5 M1.4 11.5 H15.4" stroke="#8a8886" stroke-width="1.1" fill="none"/><path d="M15.4 5.4 V23 M1.4 17.5 H22.5 M8.5 17.5 V23 M15.4 11.5 H22.5" stroke="#106ebe" stroke-width="1.2" fill="none"/><path d="M1.4 5.4 H22.5" stroke="#3b3a39" stroke-width="1.1"/></g>
<g transform="translate(890.60 440.00)"><text x="5.2" y="19.8" font-family="Liberation Sans, sans-serif" font-weight="bold" font-size="20" fill="#1a7dc9" textLength="11.4" lengthAdjust="spacingAndGlyphs">R</text></g>
<g transform="translate(715.60 474.75)"><text x="0.2" y="18.1" font-family="Liberation Sans, sans-serif" font-size="21.3" fill="#1f7fcf" stroke="#1f7fcf" stroke-width="0.95" textLength="23" lengthAdjust="spacingAndGlyphs">Py</text></g>
<g transform="translate(750.60 474.75)"><path d="M1.2 1.6 V23.65" stroke="#3b3a39" stroke-width="1.5" fill="none"/><path d="M0.44999999999999996 22.9 H23.3" stroke="#3b3a39" stroke-width="1.5" fill="none"/><path d="M1.9 5.8 H16.2" stroke="#106ebe" stroke-width="1.2"/><circle cx="18.8" cy="5.8" r="2.6" fill="#6cb0ea" stroke="#106ebe" stroke-width="1.2"/><path d="M1.9 12.3 H12.7 M1.9 17.1 H7.5" stroke="#605e5c" stroke-width="1.2"/><rect x="12.85" y="11.05" width="2.30" height="2.50" fill="#c8c6c4" stroke="#605e5c" stroke-width="0.9"/><rect x="7.65" y="15.85" width="2.30" height="2.50" fill="#c8c6c4" stroke="#605e5c" stroke-width="0.9"/></g>
<g transform="translate(785.60 474.75)"><path d="M9 12 H15.1 M12.2 4.6 V19.9 M11.6 4.6 H15.1 M11.6 19.9 H15.1" stroke="#3b3a39" stroke-width="1.3" fill="none"/><rect x="1.35" y="9.75" width="7.00" height="4.50" fill="#83beec" stroke="#106ebe" stroke-width="1.3"/><rect x="15.75" y="2.55" width="6.70" height="4.20" fill="#83beec" stroke="#106ebe" stroke-width="1.3"/><rect x="15.75" y="10.15" width="6.70" height="4.10" fill="#83beec" stroke="#106ebe" stroke-width="1.3"/><rect x="15.75" y="17.75" width="6.70" height="4.20" fill="#83beec" stroke="#106ebe" stroke-width="1.3"/></g>
<g transform="translate(820.60 474.75)"><path d="M1.7 3.4 H22.4 V16.2 H10.4 L5.2 21.8 V16.2 H1.7 Z" fill="#fbfbfb" stroke="#1a6fc0" stroke-width="1.5" stroke-linejoin="miter"/></g>
<g transform="translate(855.60 474.75)"><path d="M4 5.7 V2.6 H14.2 L19.9 8.2 V23 H4 V14.3" fill="#fbfbfb" stroke="#3b3a39" stroke-width="1.4" transform="translate(-0.2 0.1) scale(1.0 1.0)"/><path d="M14 2.7 V8.3 H19.7" fill="none" stroke="#3b3a39" stroke-width="1.2"/><circle cx="4.5" cy="10.2" r="2.2" fill="#6cb0ea" stroke="#1a6fc0" stroke-width="1.2"/><path d="M9.7 12.3 H17.2 M6.7 15.8 H14.2" stroke="#3d9be0" stroke-width="1.4"/></g>
<g transform="translate(890.60 474.75)"><path d="M6.4 2.9 H2.6 Q1.7 2.9 1.7 3.9 V7.5 Q1.7 9 3 10 L7.2 13.2 M17.6 2.9 H21.7 Q22.6 2.9 22.6 3.9 V7.5 Q22.6 9 21.3 10 L17.2 13.2" fill="none" stroke="#3b3a39" stroke-width="1.4"/><path d="M6.5 4 H17.5 V11 C17.5 14.5 14.5 16.6 12 16.6 C9.5 16.6 6.5 14.5 6.5 11 Z" fill="#fbfbfb" stroke="#3b3a39" stroke-width="1.4" stroke-linejoin="round"/><path d="M10.1 16.6 L8.7 20.6 M13.9 16.6 L15.4 20.6" stroke="#3b3a39" stroke-width="1.3" fill="none"/><rect x="5.7" y="1.6" width="12.7" height="3.4" rx="0.6" fill="#2a84d4" stroke="#1a6fc0" stroke-width="0.6"/><path d="M5.7 24 V22.2 Q5.7 20.6 7.3 20.6 H16.8 Q18.4 20.6 18.4 22.2 V24 Z" fill="#2a84d4" stroke="#1a6fc0" stroke-width="0.6"/></g>
<g transform="translate(715.60 509.50)"><path d="M3.4 1.7 H14.2 L20.1 7.2 V25 H3.4 Z" fill="#fbfbfb" stroke="#3b3a39" stroke-width="1.5"/><path d="M14.2 1.7 V7.2 H20.1" fill="none" stroke="#3b3a39" stroke-width="1.2"/><rect x="5.8" y="14.8" width="2.3" height="7.4" fill="#3b3a39"/><rect x="10.2" y="18" width="2.6" height="4.2" fill="#3b3a39"/><rect x="15.1" y="11.9" width="2.4" height="10.3" fill="#3b3a39"/></g>
<g transform="translate(750.60 509.50)"><rect x="1.40" y="4.80" width="20.80" height="15.90" fill="#fff" stroke="#3b3a39" stroke-width="1.4"/><text x="11.8" y="16.299999999999997" font-family="Liberation Sans, sans-serif" font-size="11.6" fill="#2b88d8" stroke="#2b88d8" stroke-width="0.25" text-anchor="middle" textLength="16.8" lengthAdjust="spacingAndGlyphs">123</text><path d="M3.6 18.5 H20.6" stroke="#a19f9d" stroke-width="1.1"/><path d="M4.2 0.7 H10.3 L6.9 5.9 H8.8 L0.5 14.5 L3.4 8.2 H0 Z" fill="#f7a928" stroke="#d97706" stroke-width="0.9" stroke-linejoin="round"/></g>
<g transform="translate(785.60 509.50)"><path d="M22.2 9 V2.9 H1.9 V22.4 H12" fill="#fbfbfb" stroke="#3b3a39" stroke-width="1.3"/><rect x="2.5" y="3.5" width="19" height="2.4" fill="#c8c6c4"/><path d="M1.9 6.3 H22.2" stroke="#3b3a39" stroke-width="0.9"/><rect x="5.15" y="10.35" width="3.50" height="2.80" fill="#c8c6c4" stroke="#8a8886" stroke-width="0.9"/><rect x="5.15" y="16.45" width="3.50" height="3.10" fill="#c8c6c4" stroke="#8a8886" stroke-width="0.9"/><path d="M12.2 13.3 H23.6 V14.4 L20.2 19.3 V24.4 H17.2 V19.3 L12.2 14.4 Z" fill="#fdfdfd" stroke="#3b3a39" stroke-width="1.4" stroke-linejoin="miter"/><path d="M4.2 0.7 H10.3 L6.9 5.9 H8.8 L0.5 14.5 L3.4 8.2 H0 Z" fill="#f7a928" stroke="#d97706" stroke-width="0.9" stroke-linejoin="round"/></g>
<g transform="translate(820.60 509.50)"><rect x="1.5" y="2.6" width="20.8" height="20.8" fill="#f5f4f3"/><path d="M20.8 8.5 L17.1 7.7 L15.3 7 L13.5 8.1 L14.2 11 L9.9 13.5 L10.3 19 L8.1 22.4 H13.5 L13.2 18.2 L17.1 15.7 L17.9 12.4 L22.2 10.3 Z" fill="#83beec"/><path d="M13.5 22.4 L13.2 18.2 L17.1 15.7 L17.9 12.4 L22.2 10.3" fill="none" stroke="#0f5ca8" stroke-width="1.2"/><path d="M8.4 2.9 H22 V11 M15.2 23.1 H1.8 V13.9" fill="none" stroke="#0f5ca8" stroke-width="2.6"/><path d="M8.4 3.6 H21.3 V10 M14 22.4 H2.5 V14.5" fill="none" stroke="#5b9fd8" stroke-width="1.1"/><path d="M-0.6 2 L0.6 0.7 H6 L7.2 2 V10.3 L3.3 14.3 L-0.6 10.3 Z" fill="#e0700f"/><circle cx="3.2" cy="5.4" r="1.5" fill="#fff"/><circle cx="22.4" cy="14.6" r="2" fill="#e0700f"/><circle cx="20" cy="21.1" r="3.4" fill="#e0700f"/></g>
<g transform="translate(855.60 509.50)"><path d="M0.8 12.8 L9.3 2.7 Q10 2 10.8 2.9 L11.5 3.6 L12.9 2.7 Q13.8 2 14.6 2.8 L23.1 12.8 L14.6 22.8 Q13.8 23.6 12.9 22.9 L11.5 22 L10.8 22.7 Q10 23.5 9.3 22.9 Z" fill="#fbfbfb" stroke="#8a2da5" stroke-width="1.3" stroke-linejoin="round"/><path d="M11.5 3.6 L9.7 6.4 Q9 7.7 9.9 8.7 L18.3 17.6 M11.5 22 L9.7 19.2 Q9 17.9 9.9 16.9 L18.3 7.9" fill="none" stroke="#8a2da5" stroke-width="1.3"/></g>
<g transform="translate(890.60 509.50)"><path d="M1.6 3.3 H14.6 Q15.4 3.3 16 4 L22.4 11.6 Q22.9 12.2 22.4 12.8 L16 20.4 Q15.4 21.1 14.6 21.1 H1.6 Q0.6 21.1 1.2 20.2 L7.2 12.2 L1.2 4.2 Q0.6 3.3 1.6 3.3 Z" fill="#fbfbfb" stroke="#1274e0" stroke-width="1.5" stroke-linejoin="round"/><path d="M15 3.6 L7.2 12.6 M19.8 8.7 L8.7 21" stroke="#1274e0" stroke-width="1.3" fill="none"/></g>
<!-- VIZ-END -->
</svg>
<div class="abs" style="left:717px;top:592.15px;font-size:14.4px;line-height:18.72px;white-space:nowrap;">Legend</div>
<div class="abs" style="left:707px;top:618px;width:212.5px;height:34.5px;background:#fff;border:1px dashed #c6c4c2"></div>
<div class="abs" style="left:721px;top:626.21px;font-size:14.84px;line-height:19.29px;white-space:nowrap;">Add data fields here</div>
<div class="abs" style="left:717px;top:667.25px;font-size:14.4px;line-height:18.72px;white-space:nowrap;">Values</div>
<div class="abs" style="left:707px;top:693px;width:212.5px;height:36px;border:1px dashed #c6c4c2"></div>
<div class="abs" style="left:711px;top:698.6px;width:204.6px;height:27px;background:#edebe9;border:1px solid #c8c6c4;border-radius:2px"></div>
<div class="abs" style="left:716.5px;top:701.65px;font-size:15.2px;line-height:19.76px;white-space:nowrap;">Count of Priority</div>
<div class="abs" style="left:717px;top:742.85px;font-size:14.4px;line-height:18.72px;white-space:nowrap;">Details</div>
<div class="abs" style="left:707px;top:769.4px;width:212.5px;height:70px;border:1px dashed #c6c4c2;border-bottom:none"></div>
<div class="abs" style="left:711px;top:773.6px;width:204.6px;height:60px;background:#edebe9;border:1px solid #c8c6c4;border-radius:2px"></div>
<div class="abs" style="left:716.3px;top:778.20px;font-size:14.85px;line-height:19.3px;white-space:nowrap;">Priority Hierarchy</div>
<div class="abs" style="left:726.6px;top:802.50px;font-size:14.85px;line-height:19.3px;white-space:nowrap;">Priority</div>
<svg class="abs" style="left:0;top:0" width="938" height="909" viewBox="0 0 938 909"><path d="M877.8 708.4 l7.2 7 l7.2 -7" fill="none" stroke="#323130" stroke-width="1.15"/><path d="M900.4 707.4 l9.6 9.6 m0 -9.6 l-9.6 9.6" fill="none" stroke="#323130" stroke-width="1.15"/><path d="M877.8 783.6 l7.2 7 l7.2 -7" fill="none" stroke="#323130" stroke-width="1.15"/><path d="M900.4 782.4 l9.6 9.6 m0 -9.6 l-9.6 9.6" fill="none" stroke="#323130" stroke-width="1.15"/><path d="M900.4 807.6 l9.6 9.6 m0 -9.6 l-9.6 9.6" fill="none" stroke="#323130" stroke-width="1.15"/></svg>
<div class="abs" style="left:701px;top:829px;width:226px;height:30px;background:#f3f2f1"></div>
<div class="abs" style="left:920.5px;top:583px;width:6px;height:269px;background:#c8c6c4;border-radius:3px"></div>
<div class="abs" style="left:697px;top:660px;width:231px;height:170px;border:5.5px solid #1b9af0"></div>
<div class="abs" style="left:717px;top:842.15px;font-size:14.4px;line-height:18.72px;white-space:nowrap;">Tooltips</div>
<div class="abs" style="left:707px;top:869px;width:212.5px;height:34.5px;background:#fff;border:1px dashed #c6c4c2"></div>
<div class="abs" style="left:721px;top:875.51px;font-size:14.84px;line-height:19.29px;white-space:nowrap;">Add data fields here</div>

</body></html>
